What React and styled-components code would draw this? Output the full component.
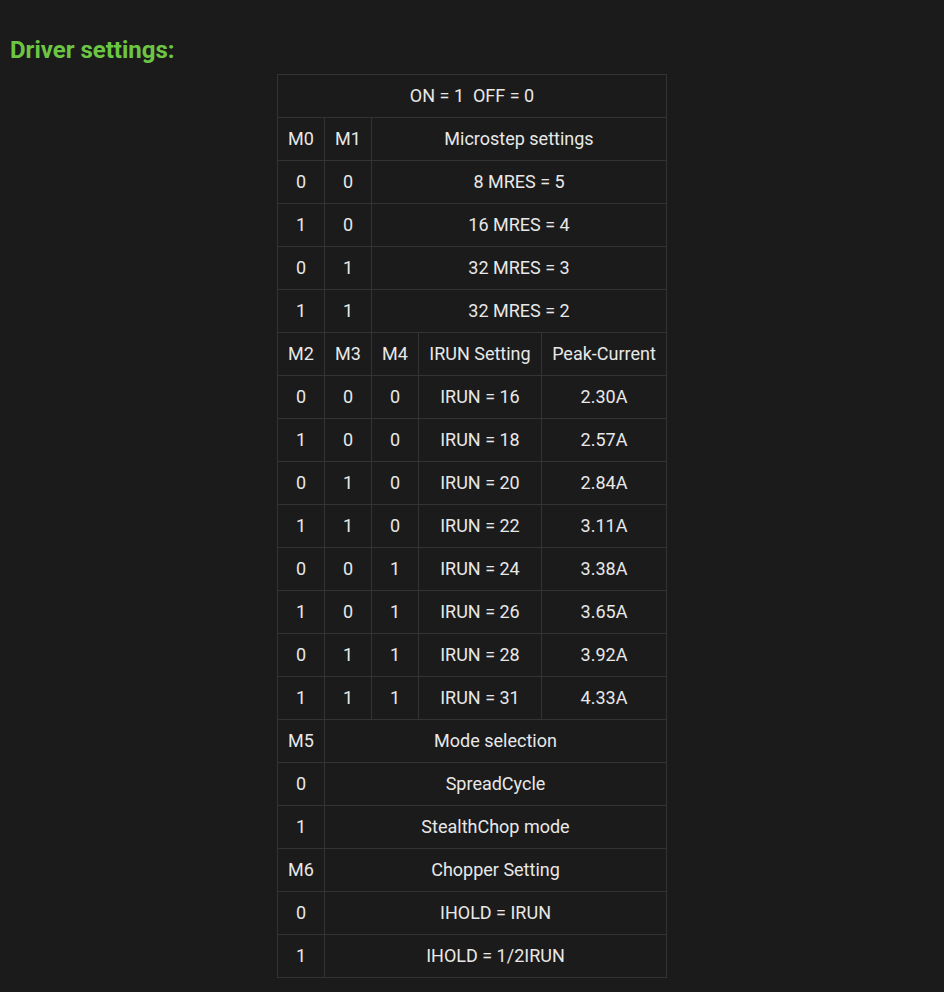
import React from "react";
import styled, { createGlobalStyle } from "styled-components";

const Global = createGlobalStyle`
  html, body { margin: 0; padding: 0; background: #1b1b1b; }
  body { font-family: Roboto, "Liberation Sans", sans-serif; color: #e8e8e8; }
`;

const Page = styled.div`
  min-height: 992px;
  padding: 36px 10px 0;
  box-sizing: border-box;
`;

const Heading = styled.h2`
  margin: 0 0 10px;
  font-size: 24px;
  line-height: 28px;
  font-weight: 700;
  color: #6cc644;
`;

const Table = styled.table`
  border-collapse: collapse;
  margin: 0 auto;
  table-layout: fixed;
  width: 389px;
`;

const Col = styled.col`
  width: ${(p) => p.$w}px;
`;

const Cell = styled.td`
  border: 1px solid #333;
  height: 40px;
  padding: 0 0 2px;
  text-align: center;
  vertical-align: middle;
  font-size: 18px;
  color: #e8e8e8;
  white-space: nowrap;
`;

const widths = [47, 47, 47, 123, 125];

const rows = [
  [["ON = 1\u00a0\u00a0OFF = 0", 5]],
  [["M0"], ["M1"], ["Microstep settings", 3]],
  [["0"], ["0"], ["8 MRES = 5", 3]],
  [["1"], ["0"], ["16 MRES = 4", 3]],
  [["0"], ["1"], ["32 MRES = 3", 3]],
  [["1"], ["1"], ["32 MRES = 2", 3]],
  [["M2"], ["M3"], ["M4"], ["IRUN Setting"], ["Peak-Current"]],
  [["0"], ["0"], ["0"], ["IRUN = 16"], ["2.30A"]],
  [["1"], ["0"], ["0"], ["IRUN = 18"], ["2.57A"]],
  [["0"], ["1"], ["0"], ["IRUN = 20"], ["2.84A"]],
  [["1"], ["1"], ["0"], ["IRUN = 22"], ["3.11A"]],
  [["0"], ["0"], ["1"], ["IRUN = 24"], ["3.38A"]],
  [["1"], ["0"], ["1"], ["IRUN = 26"], ["3.65A"]],
  [["0"], ["1"], ["1"], ["IRUN = 28"], ["3.92A"]],
  [["1"], ["1"], ["1"], ["IRUN = 31"], ["4.33A"]],
  [["M5"], ["Mode selection", 4]],
  [["0"], ["SpreadCycle", 4]],
  [["1"], ["StealthChop mode", 4]],
  [["M6"], ["Chopper Setting", 4]],
  [["0"], ["IHOLD = IRUN", 4]],
  [["1"], ["IHOLD = 1/2IRUN", 4]],
];

export default function App() {
  return (
    <Page>
      <Global />
      <Heading>Driver settings:</Heading>
      <Table>
        <colgroup>
          {widths.map((w, i) => (
            <Col key={i} $w={w} />
          ))}
        </colgroup>
        <tbody>
          {rows.map((r, i) => (
            <tr key={i}>
              {r.map(([t, span], j) => (
                <Cell key={j} colSpan={span || 1}>{t}</Cell>
              ))}
            </tr>
          ))}
        </tbody>
      </Table>
    </Page>
  );
}
